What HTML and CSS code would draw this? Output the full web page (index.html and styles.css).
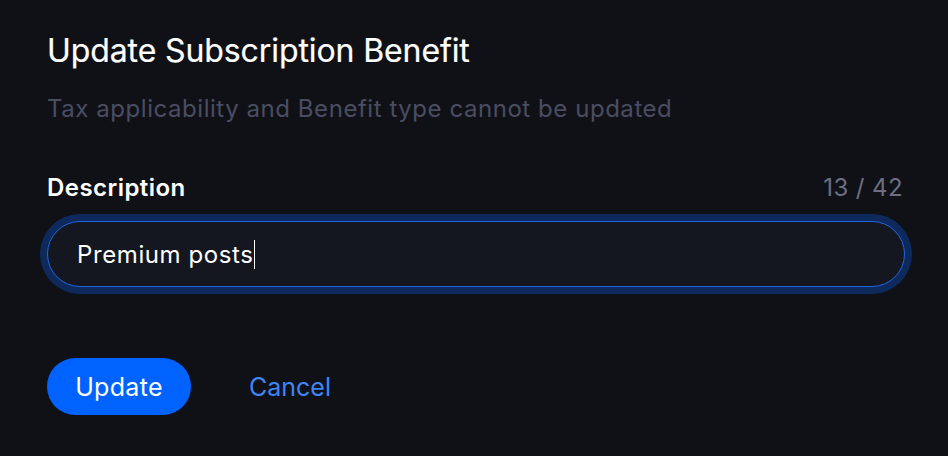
FILE: index.html
```html
<!DOCTYPE html>
<html>
<head>
<meta charset="utf-8">
<link rel="stylesheet" href="styles.css">
</head>
<body>
<div class="dialog">
  <h1 class="title">Update Subscription Benefit</h1>
  <p class="subtitle">Tax applicability and Benefit type cannot be updated</p>
  <div class="field">
    <div class="field-head">
      <label class="label">Description</label>
      <span class="count">13 / 42</span>
    </div>
    <div class="input"><span class="value">Premium posts</span><span class="caret"></span></div>
  </div>
  <div class="actions">
    <button class="btn-primary">Update</button>
    <button class="btn-link">Cancel</button>
  </div>
</div>
</body>
</html>
```
FILE: styles.css
```css
html, body {
  margin: 0;
  padding: 0;
  background: #101116;
  height: 100%;
}
body {
  font-family: Inter, "Noto Sans", sans-serif;
  color: #ffffff;
}
.dialog {
  padding: 31px 43px 0 47px;
  display: flex;
  flex-direction: column;
}
.title {
  margin: 0;
  font-size: 32px;
  font-weight: 400;
  line-height: 40px;
  letter-spacing: -0.1px;
  -webkit-text-stroke: 0.2px #ffffff;
}
.subtitle {
  margin: 23px 0 0 0;
  font-size: 24px;
  line-height: 30px;
  letter-spacing: 0.55px;
  color: #4a4d62;
}
.field {
  margin-top: 49px;
  display: flex;
  flex-direction: column;
}
.field-head {
  display: flex;
  justify-content: space-between;
  align-items: baseline;
  padding-right: 2px;
}
.label {
  font-size: 24px;
  font-weight: 600;
  line-height: 30px;
  letter-spacing: 0.45px;
}
.count {
  font-size: 24px;
  line-height: 30px;
  letter-spacing: 0.4px;
  color: #6c6f82;
}
.input {
  margin-top: 18px;
  height: 64px;
  border: 1px solid #2166e0;
  border-radius: 33px;
  box-shadow: 0 0 0 7px #0e2a5d;
  background: #14171f;
  display: flex;
  align-items: center;
  padding-left: 29px;
  font-size: 24px;
  letter-spacing: 0.6px;
}
.caret {
  display: inline-block;
  width: 1.5px;
  height: 29px;
  background: #ffffff;
  margin-left: 0;
}
.actions {
  margin-top: 71px;
  display: flex;
  align-items: center;
  gap: 58px;
}
.btn-primary {
  font-family: inherit;
  font-size: 25px;
  letter-spacing: 0.3px;
  color: #ffffff;
  background: #0062ff;
  border: none;
  border-radius: 29px;
  height: 57px;
  width: 144px;
  padding: 0;
  cursor: pointer;
}
.btn-link {
  font-family: inherit;
  font-size: 25px;
  letter-spacing: 0;
  color: #3d86f6;
  background: none;
  border: none;
  padding: 0;
  cursor: pointer;
}
```
